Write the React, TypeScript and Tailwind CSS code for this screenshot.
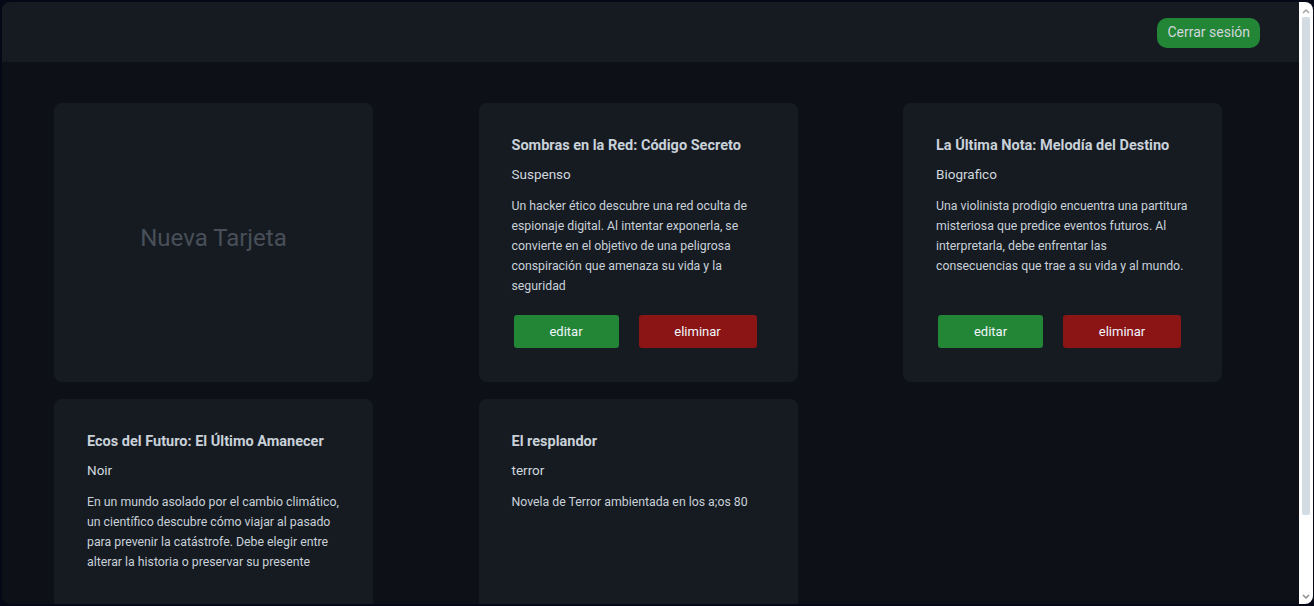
import React from "react";

type Card = { title: string; cat: string; desc: string; actions: boolean };

const cards: Card[] = [
  {
    title: "Sombras en la Red: Código Secreto",
    cat: "Suspenso",
    desc: "Un hacker ético descubre una red oculta de espionaje digital. Al intentar exponerla, se convierte en el objetivo de una peligrosa conspiración que amenaza su vida y la seguridad",
    actions: true,
  },
  {
    title: "La Última Nota: Melodía del Destino",
    cat: "Biografico",
    desc: "Una violinista prodigio encuentra una partitura misteriosa que predice eventos futuros. Al interpretarla, debe enfrentar las consecuencias que trae a su vida y al mundo.",
    actions: true,
  },
  {
    title: "Ecos del Futuro: El Último Amanecer",
    cat: "Noir",
    desc: "En un mundo asolado por el cambio climático, un científico descubre cómo viajar al pasado para prevenir la catástrofe. Debe elegir entre alterar la historia o preservar su presente",
    actions: false,
  },
  {
    title: "El resplandor",
    cat: "terror",
    desc: "Novela de Terror ambientada en los a;os 80",
    actions: false,
  },
];

function BookCard({ c }: { c: Card }) {
  return (
    <div className="h-[279px] rounded-lg bg-[#161b22] px-[33px] pt-[33px] pb-[34px] flex flex-col text-[#c9d1d9]">
      <div className="text-[14.5px] font-bold leading-[20px] text-[#c9d1d9]">{c.title}</div>
      <div className="mt-2 text-[13.5px] leading-[20px] text-[#d0d7de]">{c.cat}</div>
      <div className="mt-3 text-[12.3px] leading-[20px] text-[#c9d1d9]">{c.desc}</div>
      {c.actions && (
        <div className="mt-auto flex gap-5 pl-[2px]">
          <button className="h-[33px] w-[105px] rounded-[3px] bg-[#238636] text-[13px] text-[#f0f6fc]">
            editar
          </button>
          <button className="h-[33px] w-[118px] rounded-[3px] bg-[#8b1414] text-[13px] text-[#f0f6fc]">
            eliminar
          </button>
        </div>
      )}
    </div>
  );
}

export default function App() {
  return (
    <div
      className="w-[1314px] h-[606px] bg-[#050816] pt-[2px] pl-[2px] pr-[1px] pb-[2px] overflow-hidden"
      style={{ fontFamily: "Roboto, 'Liberation Sans', sans-serif" }}
    >
      <div className="flex h-full rounded-lg overflow-hidden">
        <div className="flex-1 flex flex-col bg-[#0d1117] overflow-hidden">
          <header className="h-[60px] shrink-0 bg-[#161b22] flex items-center justify-end pr-[39px]">
            <button className="mt-[1px] h-[30px] px-[10px] rounded-[10px] bg-[#238636] text-[14px] text-[#d1d7dd]">
              Cerrar sesión
            </button>
          </header>
          <main className="pt-[41px] pl-[52px] grid grid-cols-[319px_319px_319px] gap-x-[105.5px] gap-y-[17px]">
            <div className="h-[279px] rounded-lg bg-[#161b22] flex items-center justify-center">
              <span className="mb-[9px] text-[24px] text-[#484f58]">Nueva Tarjeta</span>
            </div>
            {cards.map((c) => (
              <BookCard key={c.title} c={c} />
            ))}
          </main>
        </div>
        <div className="w-[14px] shrink-0 bg-white flex flex-col items-center">
          <svg width="10" height="8" viewBox="0 0 10 8" className="mt-[5px]">
            <path d="M2 6 L5 3 L8 6" stroke="#a3a3a3" strokeWidth="1.5" fill="none" />
          </svg>
          <div className="mt-[2px] w-[8px] h-[498px] rounded-[2px] bg-[#d3dbe3]" />
          <div className="flex-1" />
          <svg width="10" height="8" viewBox="0 0 10 8" className="mb-[3px]">
            <path d="M2 2 L5 5 L8 2" stroke="#8a8a8a" strokeWidth="1.5" fill="none" />
          </svg>
        </div>
      </div>
    </div>
  );
}
